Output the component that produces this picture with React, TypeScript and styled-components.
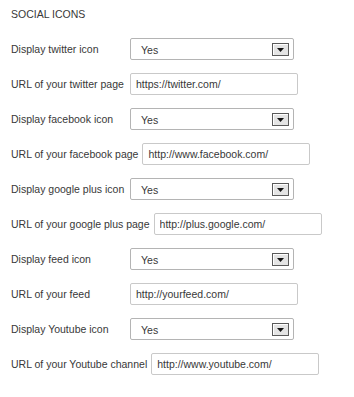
import React from "react";
import styled, { createGlobalStyle } from "styled-components";

interface IField {
  label: string;
  kind: "select" | "text";
  value: string;
}

const fields: IField[] = [
  { label: "Display twitter icon", kind: "select", value: "Yes" },
  { label: "URL of your twitter page", kind: "text", value: "https://twitter.com/" },
  { label: "Display facebook icon", kind: "select", value: "Yes" },
  { label: "URL of your facebook page", kind: "text", value: "http://www.facebook.com/" },
  { label: "Display google plus icon", kind: "select", value: "Yes" },
  { label: "URL of your google plus page", kind: "text", value: "http://plus.google.com/" },
  { label: "Display feed icon", kind: "select", value: "Yes" },
  { label: "URL of your feed", kind: "text", value: "http://yourfeed.com/" },
  { label: "Display Youtube icon", kind: "select", value: "Yes" },
  { label: "URL of your Youtube channel", kind: "text", value: "http://www.youtube.com/" },
];

const App: React.FC = () => {
  return (
    <>
      <GlobalStyle />
      <Panel>
        <Heading>Social icons</Heading>
        <Form>
          {fields.map((f) => (
            <Row key={f.label}>
              <Label>{f.label}</Label>
              {f.kind === "select" ? (
                <SelectBox>
                  <span>{f.value}</span>
                  <ArrowButton>
                    <svg width="7" height="4" viewBox="0 0 7 4">
                      <path d="M0 0 H7 L3.5 4 Z" fill="#111" />
                    </svg>
                  </ArrowButton>
                </SelectBox>
              ) : (
                <TextInput type="text" value={f.value} readOnly />
              )}
            </Row>
          ))}
        </Form>
      </Panel>
    </>
  );
};

export default App;

const GlobalStyle = createGlobalStyle`
  body {
    margin: 0;
    background: #fff;
    font-family: "Liberation Sans", Arial, sans-serif;
    color: #383838;
  }
`;

const Panel = styled.div`
  padding: 8px 0 0 11px;
`;

const Heading = styled.h3`
  margin: 0 0 18px;
  font-size: 10.5px;
  font-weight: normal;
  line-height: 12px;
  text-transform: uppercase;
  color: #383838;
`;

const Form = styled.div`
  display: flex;
  flex-direction: column;
  gap: 13px;
`;

const Row = styled.div`
  display: flex;
  align-items: center;
  height: 22px;
`;

const Label = styled.label`
  min-width: 115px;
  margin-right: 4px;
  margin-top: -1px;
  font-size: 10.5px;
  color: #383838;
  white-space: nowrap;
`;

const SelectBox = styled.div`
  box-sizing: border-box;
  width: 164px;
  height: 22px;
  display: flex;
  align-items: center;
  justify-content: space-between;
  padding: 1px 4px 0 10px;
  border: 1px solid #b4b4b4;
  border-radius: 2px;
  background: #fff;
  font-size: 10.5px;
  color: #383838;
`;

const ArrowButton = styled.div`
  box-sizing: border-box;
  width: 17px;
  height: 13px;
  margin-top: -1px;
  display: flex;
  align-items: flex-end;
  justify-content: center;
  padding-bottom: 3px;
  border: 1px solid #5a5a5a;
  background: #e4e4e4;
  box-shadow: inset 1px 1px 0 #fff;
`;

const TextInput = styled.input`
  box-sizing: border-box;
  width: 168px;
  height: 22px;
  padding: 0 5px;
  border: 1px solid #c9c9c9;
  border-radius: 2px;
  background: #fff;
  font-family: "Liberation Sans", Arial, sans-serif;
  font-size: 10.5px;
  color: #383838;
  outline: none;
`;
